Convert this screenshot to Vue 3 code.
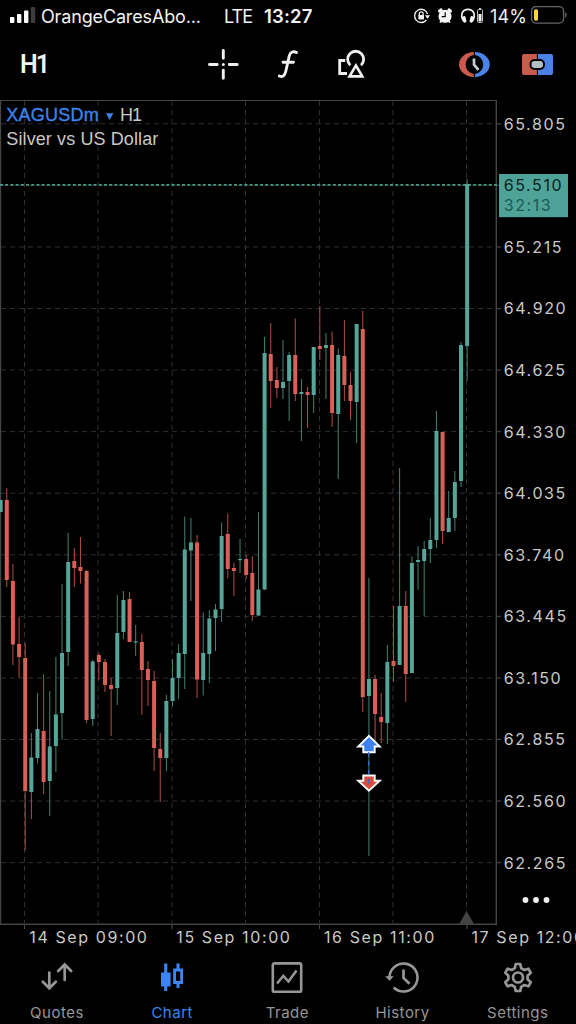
<script setup>
const UP = 1
const DOWN = 0

// [direction, wick top, wick bottom, body top, body bottom]
const series = [
  [UP, 500, 512, 500, 512],
  [DOWN, 488, 587, 500, 580],
  [DOWN, 564, 665, 581, 644.5],
  [DOWN, 617, 678, 644, 657],
  [DOWN, 643, 850.5, 658, 791],
  [UP, 733, 819, 757.5, 792],
  [UP, 693, 763.5, 729, 758],
  [DOWN, 674, 794, 731, 782],
  [UP, 691, 816, 746.5, 781],
  [UP, 657, 772, 714.5, 746],
  [UP, 584, 740, 653, 713],
  [UP, 533, 666, 562, 652],
  [DOWN, 548, 587, 561, 568],
  [DOWN, 537, 583.5, 567, 571],
  [DOWN, 570, 723, 571, 720],
  [UP, 660, 726, 661.5, 719],
  [DOWN, 653, 680, 655, 662],
  [DOWN, 659, 692, 662, 685],
  [DOWN, 678, 736, 685, 689],
  [UP, 595, 705, 633, 688],
  [UP, 591, 639, 600, 632],
  [DOWN, 592, 642, 599, 642],
  [UP, 625, 656, 641.3, 642.5],
  [DOWN, 634, 715, 642, 670],
  [DOWN, 661, 706, 669, 680],
  [DOWN, 671, 771, 681, 748],
  [DOWN, 733, 802, 749, 758],
  [UP, 695, 771, 701, 758],
  [UP, 659, 706, 678, 701],
  [UP, 644, 699, 653, 678],
  [UP, 516.5, 689, 549.5, 654],
  [UP, 518, 601, 542.5, 550.5],
  [DOWN, 535, 698, 542.5, 679.5],
  [UP, 612.5, 695.5, 653, 680],
  [UP, 610, 683, 618.5, 654],
  [UP, 604, 651, 609.5, 618],
  [UP, 522.5, 622, 536, 609],
  [DOWN, 513.5, 578.5, 534, 569],
  [DOWN, 563, 596, 568, 571],
  [UP, 539, 573, 559, 560.2],
  [DOWN, 555, 579, 559, 575],
  [DOWN, 556, 621, 573, 615],
  [UP, 512, 616, 589.5, 615.5],
  [UP, 337, 590, 353, 589.5],
  [DOWN, 323, 408, 354, 381],
  [DOWN, 367, 398, 380, 388],
  [UP, 340, 399, 382, 388],
  [UP, 352, 421, 355, 381],
  [DOWN, 318.5, 401, 355, 394],
  [UP, 379, 441, 392, 394],
  [DOWN, 387, 428, 392, 395],
  [UP, 347, 413, 347, 395],
  [DOWN, 306, 360, 346, 349],
  [UP, 333, 399, 345, 348],
  [DOWN, 331.5, 427, 345, 413],
  [UP, 348.5, 479, 355, 414],
  [DOWN, 320, 401, 356, 385],
  [DOWN, 372, 420, 385, 401],
  [UP, 324, 443, 324, 402],
  [DOWN, 310.5, 712, 329, 697],
  [UP, 578, 856, 679, 696],
  [DOWN, 675, 741, 679, 714],
  [DOWN, 693, 743, 717, 722],
  [UP, 645, 744, 662, 723],
  [DOWN, 606, 682, 661, 666],
  [UP, 468, 665, 606, 665],
  [DOWN, 591, 702, 606, 674],
  [UP, 556.5, 673, 563, 673],
  [UP, 546, 590, 560, 562],
  [UP, 541, 616, 549, 561],
  [UP, 518, 563, 540, 549],
  [UP, 411, 548, 431, 540],
  [DOWN, 432, 544, 432, 531],
  [UP, 491, 532, 518, 532],
  [UP, 471, 531, 482, 518],
  [UP, 342, 487, 345, 481],
  [UP, 179, 381, 184, 346],
]

const candles = series.map(([dir, high, low, top, bottom], i) => ({
  x: 0.65 + i * 6.138,
  cls: dir === UP ? 'up' : 'down',
  high,
  low,
  top,
  size: bottom - top,
}))

const columns = [24.5, 98, 172, 245.5, 319.5, 393, 466.5]
const prices = ['65.805', null, '65.215', '64.920', '64.625', '64.330', '64.035', '63.740', '63.445', '63.150', '62.855', '62.560', '62.265']
  .map((label, i) => ({ label, y: 123.8 + i * 61.57 }))
const dates = [
  { label: '14 Sep 09:00', x: 29.3 },
  { label: '15 Sep 10:00', x: 176.3 },
  { label: '16 Sep 11:00', x: 324 },
  { label: '17 Sep 12:00', x: 471.5 },
]
const ticks = [24.5, 172, 319.5, 467]
</script>

<template>
  <div class="screen">
    <div class="status">
      <svg class="signal" width="28" height="18" viewBox="0 0 28 18">
        <rect x="1" y="11" width="4.4" height="6" rx="1" fill="#fff" />
        <rect x="8" y="8" width="4.4" height="9" rx="1" fill="#fff" />
        <rect x="15" y="4.500" width="4.400" height="12.500" rx="1" fill="#fff" />
        <rect x="21.800" y="1" width="4.400" height="16" rx="1" fill="#3c3c3e" />
      </svg>
      <span class="carrier">OrangeCaresAbo...</span>
      <span class="net">LTE</span>
      <span class="time">13:27</span>
      <svg class="indicators" width="74" height="20" viewBox="0 0 74 20">
        <g fill="none" stroke="#f2f2f2" stroke-width="1.300">
          <path d="M13.400 14A6.600 6.600 0 1 1 14.600 8.200" />
          <path d="M6.300 9.500V7.700a1.900 1.900 0 0 1 3.800 0V9.500" />
        </g>
        <rect x="5.400" y="9" width="5.600" height="4.400" rx=".6" fill="#f2f2f2" />
        <path d="M12 9.300h5l-2.500 3.500z" fill="#f2f2f2" />
        <g fill="#f5f5f5">
          <circle cx="32" cy="10.300" r="6.500" />
          <ellipse cx="27.300" cy="4.500" rx="2.600" ry="1.700" transform="rotate(-38 27.300 4.500)" />
          <ellipse cx="36.700" cy="4.500" rx="2.600" ry="1.700" transform="rotate(38 36.700 4.500)" />
          <path d="M27.500 14l1.700 1.300-1.500 1.700-1.300-.8zM36.500 14l-1.700 1.300 1.500 1.700 1.300-.8z" />
        </g>
        <path d="M32.200 6.300V10.700H28.700" fill="none" stroke="#000" stroke-width="1.200" />
        <path d="M50.500 15C46.500 8 50 3.300 55 3.300S63.500 8 59.500 15" fill="none" stroke="#f2f2f2" stroke-width="1.700" />
        <rect x="49.500" y="10.200" width="3.400" height="6.600" rx="1.500" transform="rotate(-14 51 13)" fill="#f2f2f2" />
        <rect x="57.100" y="10.200" width="3.400" height="6.600" rx="1.500" transform="rotate(14 59 13)" fill="#f2f2f2" />
        <rect x="64.500" y="3.500" width="5" height="13" rx="1" fill="none" stroke="#bbb" />
        <rect x="65.500" y="8" width="3" height="7.500" fill="#f2f2f2" />
        <rect x="66" y="2" width="2" height="1.300" fill="#ccc" />
      </svg>
      <span class="percent">14%</span>
      <svg class="battery" width="38" height="20" viewBox="0 0 38 20">
        <rect x="1.600" y="1.700" width="32" height="16.400" rx="4.300" fill="none" stroke="#67676a" stroke-width="1.300" />
        <rect x="4" y="4.200" width="4" height="11.500" rx="1.600" fill="#fbd93a" />
        <path d="M35.200 7.500c2 .6 2 4.400 0 5z" fill="#67676a" />
      </svg>
    </div>

    <header class="toolbar">
      <span class="period">H1</span>
      <svg class="tool cross" width="34" height="34" viewBox="0 0 34 34">
        <path d="M17.300 3.500V11.200M17.300 23.300V31.200M3.500 17.500H11.200M23.300 17.500H31.200" stroke="#f0f0f0" stroke-width="2.900" stroke-linecap="round" />
        <circle cx="17.300" cy="17.500" r="1.500" fill="#f0f0f0" />
      </svg>
      <svg class="tool func" width="34" height="34" viewBox="0 0 34 34">
        <path d="M25.500 5.500C22.500 3.800 19.300 4.800 18.300 8.800L14.800 24.300C13.900 28.600 11.500 30.500 8.300 29M12 15.200H22.500" fill="none" stroke="#f0f0f0" stroke-width="2.900" stroke-linecap="round" />
      </svg>
      <svg class="tool shapes" width="34" height="34" viewBox="0 0 34 34">
        <g fill="none" stroke="#f0f0f0" stroke-width="2.800">
          <path d="M10.200 13.500H4.700V26.500H12" />
          <path d="M15.300 18.200A8 8 0 1 1 26 18.200" />
          <path d="M20.900 18.500L27.300 29.400H14.500Z" stroke-width="2.600" />
        </g>
      </svg>
      <svg class="tool clock" width="34" height="34" viewBox="0 0 34 34">
        <path d="M16.800 5A14.800 12.500 0 0 0 16.800 30V27A9.600 9.600 0 0 1 16.800 8Z" fill="#c95a4c" />
        <path d="M18 5A14.800 12.500 0 0 1 18 30V27A9.600 9.600 0 0 0 18 8Z" fill="#4a82e8" />
        <path d="M17 11.500V17.700L21.500 22.800" fill="none" stroke="#c3ccd0" stroke-width="2.700" />
      </svg>
      <svg class="tool trade" width="34" height="34" viewBox="0 0 34 34">
        <path d="M4 7H16.900V28H4a2 2 0 0 1-2-2V9a2 2 0 0 1 2-2Z" fill="#c95a4c" />
        <path d="M17.900 7H31a2 2 0 0 1 2 2V26a2 2 0 0 1-2 2H17.900Z" fill="#4a82e8" />
        <rect x="10.500" y="13" width="13.500" height="9" rx="4" fill="#b5bfc3" stroke="#000" stroke-width="2" />
      </svg>
    </header>

    <main class="chart">
      <svg width="576" height="848" viewBox="0 100 576 848">
        <g class="grid">
          <line v-for="x in columns" :key="x" :x1="x" :x2="x" y1="101" y2="923" />
          <line v-for="p in prices" :key="p.y" x1="1" x2="495" :y1="p.y" :y2="p.y" />
        </g>
        <path class="frame" d="M.5 924.300V100.200H496.300V924.300Z" />
        <path v-for="p in prices" :key="'t' + p.y" class="tick" :d="`M497 ${p.y}h4`" />
        <path v-for="x in ticks" :key="'d' + x" class="tick" :d="`M${x} 925v4`" />
        <path d="M0 184.900H499" stroke="#489987" stroke-width="1.600" stroke-dasharray="3 2.200" />

        <g v-for="c in candles" :key="c.x" :class="c.cls">
          <line class="wick" :x1="c.x" :x2="c.x" :y1="c.high" :y2="c.low" />
          <rect :x="c.x - 2" :y="c.top" width="4" :height="c.size" />
        </g>

        <path d="M466.500 911L474 924H459.200Z" fill="#434343" />

        <path d="M369 735.800L379.800 746.500H374.700V752.300H363.300V746.500H358.200Z" fill="#3e80ee" stroke="#fff" stroke-width="1.900" />
        <path d="M369 790.600L379.800 780.800H374.700V775.500H363.300V780.800H358.200Z" fill="#d8493e" stroke="#fff" stroke-width="1.900" />
        <path d="M368.600 752V788" stroke="#2f6ce0" stroke-width="1.200" stroke-dasharray="4.500 4.500" />

        <g class="axis">
          <template v-for="p in prices" :key="'l' + p.y">
            <text v-if="p.label" x="503.700" :y="p.y + 5.900">{{ p.label }}</text>
          </template>
          <text v-for="d in dates" :key="d.label" :x="d.x" y="942.800">{{ d.label }}</text>
        </g>

        <rect x="499" y="174" width="69" height="43.200" fill="#4fa298" />
        <g class="badge">
          <text x="503.700" y="190.800">65.510</text>
          <text class="countdown" x="503.700" y="210.800">32:13</text>
        </g>

        <text class="title symbol" x="6.300" y="121.300" textLength="92.500">XAGUSDm</text>
        <path d="M106 113.300H113.300L109.650 120Z" fill="#3d85ee" />
        <text class="title" x="120" y="121.300" textLength="22">H1</text>
        <text class="title" x="6.300" y="144.500" textLength="152">Silver vs US Dollar</text>

        <g fill="#f0f0f0">
          <circle cx="525.500" cy="900" r="2.900" />
          <circle cx="536" cy="900" r="2.900" />
          <circle cx="546.500" cy="900" r="2.900" />
        </g>
      </svg>
    </main>

    <nav class="tabs">
      <div class="tab">
        <svg width="36" height="36" viewBox="0 0 36 36">
          <path d="M10.300 11.500V26.500M3.800 20.800L10.300 27.300L16.800 20.800M25.700 19V4M19.200 10L25.700 3.500L32.200 10" fill="none" stroke="currentColor" stroke-width="2.700" stroke-linecap="round" />
        </svg>
        <span class="name">Quotes</span>
      </div>
      <div class="tab active">
        <svg width="36" height="36" viewBox="0 0 36 36">
          <path d="M10.200 2.500H13.300V11.500H16.600V25.500H13.300V30H10.200V25.500H7V11.500H10.200Z" fill="currentColor" />
          <path d="M22.500 2.500H25.500V7.500H29V23H25.500V27H22.500V23H19.200V7.500H22.500ZM22 10.500V20H26.200V10.500Z" fill="currentColor" fill-rule="evenodd" />
        </svg>
        <span class="name">Chart</span>
      </div>
      <div class="tab">
        <svg width="36" height="36" viewBox="0 0 36 36">
          <rect x="3.800" y="2.400" width="28.400" height="28.400" rx="1.600" fill="none" stroke="currentColor" stroke-width="2.600" />
          <path d="M8 22.500L14.300 15L19.500 20.500L27.500 9.500" fill="none" stroke="currentColor" stroke-width="2.500" />
        </svg>
        <span class="name">Trade</span>
      </div>
      <div class="tab">
        <svg width="36" height="36" viewBox="0 0 36 36">
          <path d="M4.500 17A14 14 0 1 1 8.700 26.500" fill="none" stroke="currentColor" stroke-width="2.600" />
          <path d="M.8 15.500H8.200L4.500 19.500Z" fill="currentColor" stroke="currentColor" stroke-width=".6" />
          <path d="M18.500 8.500V17L24.500 22.700" fill="none" stroke="currentColor" stroke-width="2.700" />
        </svg>
        <span class="name">History</span>
      </div>
      <div class="tab">
        <svg width="36" height="36" viewBox="0 0 36 36">
          <g fill="none" stroke="currentColor" stroke-width="2.700" stroke-linejoin="round">
            <path d="M15.700 3H20.300L21.200 7.200L24.300 9L28.400 7.700L30.700 11.700L27.600 14.700V18.300L30.700 21.300L28.400 25.300L24.300 24L21.200 25.800L20.300 30H15.700L14.800 25.800L11.700 24L7.600 25.300L5.300 21.300L8.400 18.300V14.700L5.300 11.700L7.600 7.700L11.700 9L14.800 7.200Z" />
            <circle cx="18" cy="16.500" r="5" />
          </g>
        </svg>
        <span class="name">Settings</span>
      </div>
    </nav>
  </div>
</template>

<style>
body {
  background: #000;
}
</style>

<style scoped>
.screen {
  width: 576px;
  height: 1024px;
  background: #000;
  color: #f2f2f2;
  font-family: Inter, "Liberation Sans", sans-serif;
  display: flex;
  flex-direction: column;
  overflow: hidden;
}
.status {
  height: 32px;
  display: flex;
  align-items: center;
  white-space: nowrap;
  font-size: 18px;
  flex: none;
}
.signal { margin: 0 4px 3px 9px; }
.carrier { width: 182px; letter-spacing: -0.15px; }
.net { width: 41px; letter-spacing: -0.9px; padding-left: 1px; box-sizing: border-box; }
.time { width: 149px; font-weight: 600; font-size: 18.500px; letter-spacing: 0.2px; }
.indicators { flex: none; }
.percent { width: 40px; margin-left: 3px; letter-spacing: 0.2px; }
.battery { margin-bottom: 2px; }
.toolbar {
  height: 68px;
  flex: none;
  display: flex;
  align-items: center;
  padding-bottom: 4px;
  box-sizing: border-box;
}
.period {
  width: 186px;
  padding-left: 20px;
  font-size: 25px;
  font-weight: 600;
  letter-spacing: -2px;
  font-family: Roboto, sans-serif;
}
.tool { flex: none; }
.func { margin-left: 31px; }
.shapes { margin-left: 30px; }
.clock { margin-left: 88px; }
.trade { margin-left: 29px; }
.chart {
  height: 848px;
  flex: none;
}
.chart svg { display: block; }
.grid line {
  stroke: #2d2f33;
  stroke-width: 1;
  stroke-dasharray: 5 4;
}
.frame {
  fill: none;
  stroke: #454545;
  stroke-width: 1.400;
}
.tick {
  stroke: #454545;
  stroke-width: 1.200;
}
.up rect { fill: #56a598; }
.down rect { fill: #d95f58; }
.wick { stroke-width: 1; }
.up .wick { stroke: #448276; }
.down .wick { stroke: #b34e48; }
.axis text {
  fill: #c9c9c9;
  font-size: 16px;
  letter-spacing: 1.600px;
}
.badge text {
  fill: #06231f;
  font-size: 16px;
  letter-spacing: 1.600px;
}
.badge .countdown { fill: #1b5a52; }
.title {
  font-family: "Liberation Sans", Arial, sans-serif;
  font-size: 18px;
  fill: #c8c8c8;
}
.title.symbol {
  fill: #3d85ee;
  stroke: #3d85ee;
  stroke-width: 0.35;
}
.tabs {
  height: 76px;
  display: grid;
  grid-template-columns: repeat(5, 115.200px);
  margin-left: -0.6px;
}
.tab {
  display: flex;
  flex-direction: column;
  align-items: center;
  padding-top: 13px;
  color: #969696;
}
.tab.active { color: #3d85f4; }
.name {
  margin-top: 6px;
  font-size: 15px;
  line-height: 20px;
  letter-spacing: 0.500px;
}
</style>
